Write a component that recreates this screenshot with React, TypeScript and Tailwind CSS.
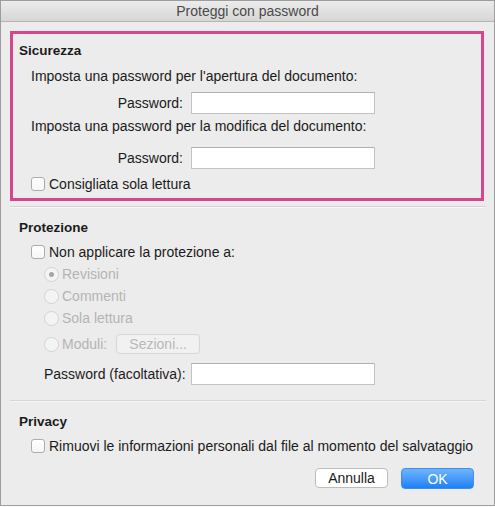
import React from 'react';

function Checkbox() {
  return (
    <span className="inline-block w-[14px] h-[14px] rounded-[3px] border border-[#adadad] bg-gradient-to-b from-white to-[#f6f6f6] shrink-0" />
  );
}

function Radio({ checked = false }: { checked?: boolean }) {
  return (
    <span className="flex items-center justify-center w-[15px] h-[15px] rounded-full border border-[#d3d3d3] bg-[#f4f4f4] shrink-0">
      {checked && <span className="w-[5px] h-[5px] rounded-full bg-[#a5a5a5]" />}
    </span>
  );
}

function TextInput() {
  return (
    <div className="w-[184px] h-[22px] bg-white border border-[#c3c3c3] border-t-[#b0b0b0]" />
  );
}

function Separator() {
  return (
    <div className="ml-[9px] w-[476px]">
      <div className="h-px bg-[#d5d5d5]" />
      <div className="h-px bg-[#f6f6f6]" />
    </div>
  );
}

export default function App() {
  return (
    <div
      className="w-[495px] h-[506px] border border-[#9d9d9d] bg-[#ececec] flex flex-col text-[14px] leading-[18px] text-[#1b1b1b]"
      style={{ fontFamily: '"Liberation Sans", Arial, sans-serif' }}
    >
      {/* Title bar */}
      <div className="h-[21px] shrink-0 border-b border-[#b4b4b4] bg-gradient-to-b from-[#ececec] to-[#d6d6d6] flex items-center justify-center text-[#4a4a4a]">
        Proteggi con password
      </div>

      {/* Sicurezza */}
      <div className="mt-[9px] ml-[9px] w-[474px] h-[170px] border-[3px] border-[#d5468f] flex flex-col">
        <div className="mt-[8px] pl-[6px] font-bold text-[13.5px]">Sicurezza</div>
        <div className="mt-[7px] pl-[18px]">Imposta una password per l'apertura del documento:</div>
        <div className="mt-[7px] flex items-center h-[22px]">
          <div className="w-[170px] text-right">Password:</div>
          <div className="ml-[8px]">
            <TextInput />
          </div>
        </div>
        <div className="mt-[3px] pl-[18px]">Imposta una password per la modifica del documento:</div>
        <div className="mt-[12px] flex items-center h-[22px]">
          <div className="w-[170px] text-right">Password:</div>
          <div className="ml-[8px]">
            <TextInput />
          </div>
        </div>
        <div className="mt-[6px] pl-[18px] flex items-center gap-[4px] h-[18px]">
          <Checkbox />
          <span>Consigliata sola lettura</span>
        </div>
      </div>

      <div className="mt-[5px]">
        <Separator />
      </div>

      {/* Protezione */}
      <div className="mt-[11px] pl-[18px] font-bold text-[13.5px]">Protezione</div>
      <div className="mt-[6px] pl-[30px] flex items-center gap-[4px] h-[18px]">
        <Checkbox />
        <span>Non applicare la protezione a:</span>
      </div>
      <div className="pl-[43px] text-[#b4b4b4] flex flex-col">
        <div className="mt-[4px] h-[18px] flex items-center gap-[3px]">
          <Radio checked />
          <span>Revisioni</span>
        </div>
        <div className="mt-[4px] h-[18px] flex items-center gap-[3px]">
          <Radio />
          <span>Commenti</span>
        </div>
        <div className="mt-[4px] h-[18px] flex items-center gap-[3px]">
          <Radio />
          <span>Sola lettura</span>
        </div>
        <div className="mt-[7px] h-[20px] flex items-center gap-[3px]">
          <Radio />
          <span>Moduli:</span>
          <button className="ml-[6px] w-[84px] h-[20px] rounded-[4px] border border-[#d6d6d6] bg-[#f1f1f1] text-[#b8b8b8]">
            Sezioni...
          </button>
        </div>
      </div>
      <div className="mt-[9px] flex items-center h-[22px]">
        <div className="pl-[43px] w-[190px]">Password (facoltativa):</div>
        <TextInput />
      </div>

      <div className="mt-[15px]">
        <Separator />
      </div>

      {/* Privacy */}
      <div className="mt-[11px] pl-[18px] font-bold text-[13.5px]">Privacy</div>
      <div className="mt-[6px] pl-[30px] flex items-center gap-[4px] h-[18px]">
        <Checkbox />
        <span>Rimuovi le informazioni personali dal file al momento del salvataggio</span>
      </div>

      <div className="mt-[13px] flex justify-end gap-[13px] pr-[20px]">
        <button className="w-[73px] h-[20px] rounded-[4px] border border-[#bdbdbd] bg-white text-[#1b1b1b] leading-none">
          Annulla
        </button>
        <button className="w-[73px] h-[21px] rounded-[4px] border border-[#3f8fe8] bg-gradient-to-b from-[#6db4fb] to-[#1b80f7] text-white leading-none">
          OK
        </button>
      </div>
    </div>
  );
}
